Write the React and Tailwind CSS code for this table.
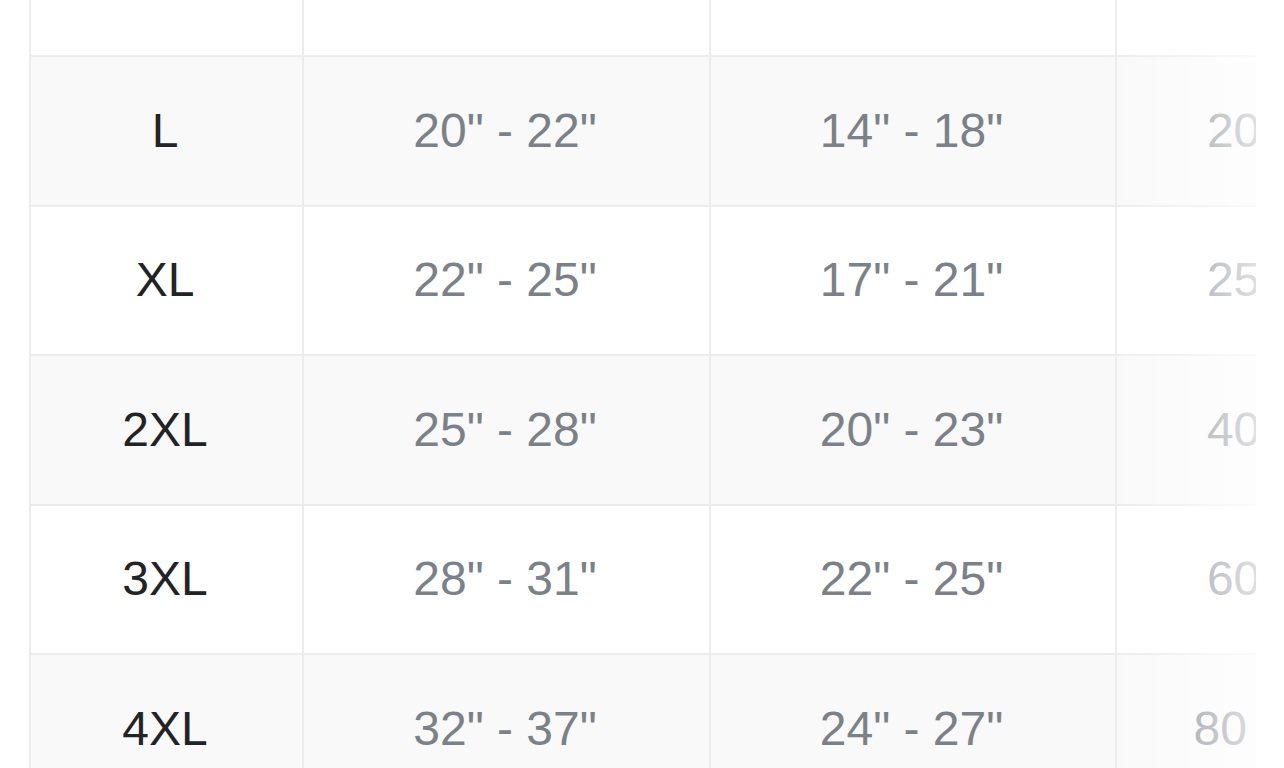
import React from 'react';

const rows = [
  { size: 'L', chest: '20" - 22"', length: '14" - 18"', weight: '20 - 25 lbs' },
  { size: 'XL', chest: '22" - 25"', length: '17" - 21"', weight: '25 - 40 lbs' },
  { size: '2XL', chest: '25" - 28"', length: '20" - 23"', weight: '40 - 60 lbs' },
  { size: '3XL', chest: '28" - 31"', length: '22" - 25"', weight: '60 - 80 lbs' },
  { size: '4XL', chest: '32" - 37"', length: '24" - 27"', weight: '80 - 100 lbs' },
];

const cell = 'shrink-0 flex items-center justify-center pr-[3px]';

const SizeRow = ({ row, striped }) => (
  <div className={`flex h-[149.5px] border-b-2 border-[#ececec] ${striped ? 'bg-[#f9f9f9]' : 'bg-white'}`}>
    <div className={`${cell} w-[273px] border-r-2 border-[#ececec] text-[#212326]`}>{row.size}</div>
    <div className={`${cell} w-[407px] border-r-2 border-[#ececec] text-[#7b8189]`}>{row.chest}</div>
    <div className={`${cell} w-[406px] border-r-2 border-[#ececec] text-[#7b8189]`}>{row.length}</div>
    <div className={`${cell} w-[407px] whitespace-nowrap text-[#7b8189]`}>{row.weight}</div>
  </div>
);

export default function App() {
  return (
    <div className="h-[768px] w-[1284px] overflow-hidden bg-white font-['Liberation_Sans',Arial,sans-serif] text-[48px] leading-normal">
      <div className="relative ml-[29px] mr-[28px] overflow-hidden border-l-2 border-[#ececec]">
        {/* tail of the previous (scrolled away) row */}
        <div className="flex h-[57px] border-b-2 border-[#ececec] bg-white">
          <div className="w-[273px] shrink-0 border-r-2 border-[#ececec]" />
          <div className="w-[407px] shrink-0 border-r-2 border-[#ececec]" />
          <div className="w-[406px] shrink-0 border-r-2 border-[#ececec]" />
          <div className="w-[407px] shrink-0" />
        </div>
        {rows.map((row, i) => (
          <SizeRow key={row.size} row={row} striped={i % 2 === 0} />
        ))}
        {/* scroll fade on the right edge */}
        <div className="absolute right-0 top-0 bottom-0 w-[150px] bg-gradient-to-r from-white/0 to-white/75" />
      </div>
    </div>
  );
}
